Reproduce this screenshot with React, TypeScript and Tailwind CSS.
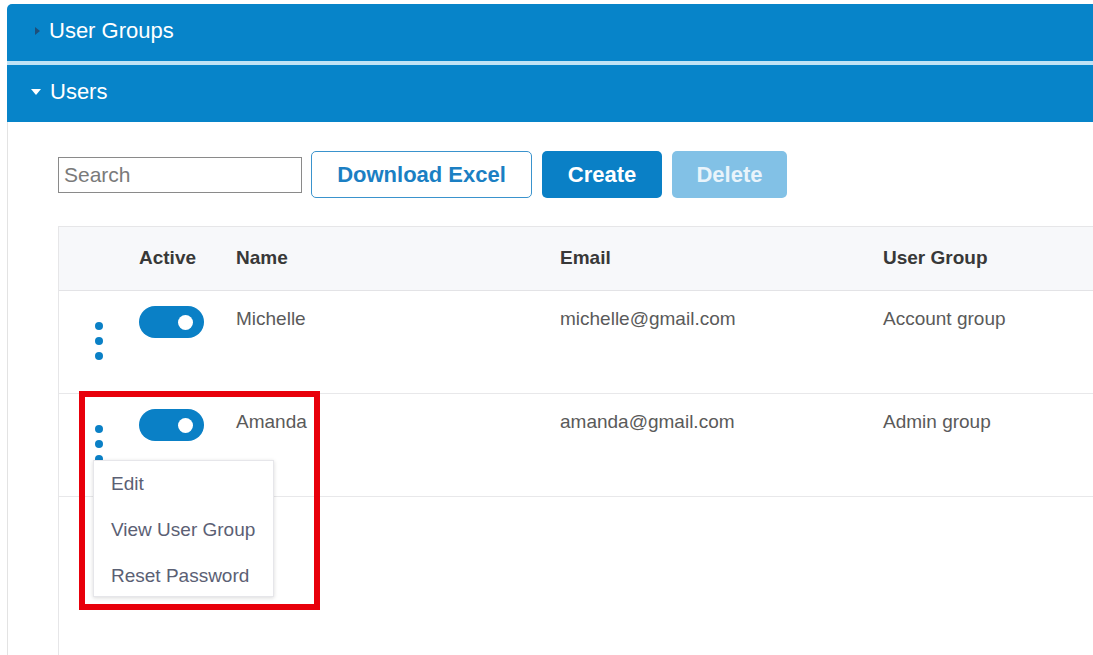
import React from "react";

function Toggle() {
  return (
    <div className="w-[65px] h-[32px] rounded-full bg-[#0a80c6] flex items-center justify-end pr-[11px]">
      <div className="w-[15px] h-[15px] rounded-full bg-white" />
    </div>
  );
}

function Dots() {
  return (
    <div className="flex flex-col items-center gap-[7px]">
      <div className="w-[8px] h-[8px] rounded-full bg-[#0a80c6]" />
      <div className="w-[8px] h-[8px] rounded-full bg-[#0a80c6]" />
      <div className="w-[8px] h-[8px] rounded-full bg-[#0a80c6]" />
    </div>
  );
}

function Row({ name, email, group, menu }: { name: string; email: string; group: string; menu?: boolean }) {
  return (
    <div className="relative flex h-[103px] border-b border-[#e8e8ea] text-[19px] text-[#5a5a5a]">
      <div className="w-[80px] flex justify-end pr-[36px] pt-[31px]">
        <Dots />
      </div>
      <div className="w-[97px] pt-[15px]">
        <Toggle />
      </div>
      <div className="w-[324px] pt-[17px] leading-[22px]">{name}</div>
      <div className="w-[323px] pt-[17px] leading-[22px]">{email}</div>
      <div className="flex-1 pt-[17px] leading-[22px]">{group}</div>
      {menu && (
        <div className="absolute left-[34px] top-[66px] w-[181px] h-[137px] bg-white border border-[#e6e6ea] shadow-[0_1px_4px_rgba(0,0,0,0.15)] flex flex-col pl-[17px] pt-[12px] gap-[24px] text-[19px] leading-[22px] text-[#5b6074] z-10">
          <div>Edit</div>
          <div>View User Group</div>
          <div>Reset Password</div>
        </div>
      )}
    </div>
  );
}

export default function App() {
  return (
    <div className="relative w-[1093px] h-[655px] overflow-hidden bg-white font-['Liberation_Sans',Arial,sans-serif]">
      <div className="pt-[4px] pl-[7px]">
        <div className="h-[57px] bg-[#0784c9] rounded-tl-[5px] flex items-center pl-[28px] pb-[4px] text-white text-[22px]">
          <span className="w-0 h-0 border-y-[4px] border-y-transparent border-l-[5px] border-l-[#1e4f7a] mr-[9px]" />
          User Groups
        </div>
        <div className="h-[4px] bg-[#bfe2f5]" />
        <div className="h-[57px] bg-[#0784c9] flex items-center pl-[24px] pb-[4px] text-white text-[22px]">
          <span className="w-0 h-0 border-x-[5px] border-x-transparent border-t-[6px] border-t-white mr-[9px]" />
          Users
        </div>
        <div className="border-l border-[#e3e3e3] h-[540px] pl-[50px] pt-[29px]">
          <div className="flex items-center">
            <div className="w-[244px] h-[36px] border border-[#8a8a8a] flex items-center pl-[5px] text-[21px] text-[#7a7a7a]">
              Search
            </div>
            <div className="ml-[9px] w-[221px] h-[47px] border border-[#3a93cd] rounded-[5px] flex items-center justify-center text-[22px] font-bold text-[#1b7fc3]">
              Download Excel
            </div>
            <div className="ml-[10px] w-[120px] h-[47px] rounded-[5px] bg-[#0a80c6] flex items-center justify-center text-[22px] font-bold text-white">
              Create
            </div>
            <div className="ml-[10px] w-[115px] h-[47px] rounded-[5px] bg-[#82c1e6] flex items-center justify-center text-[22px] font-bold text-[#e9f4fb]">
              Delete
            </div>
          </div>
          <div className="mt-[28px] border-l border-t border-[#e6e6e8] h-[500px]">
            <div className="flex h-[64px] bg-[#f7f8fa] border-b border-[#e3e3e6] items-center text-[19px] font-bold text-[#383838]">
              <div className="w-[80px]" />
              <div className="w-[97px]">Active</div>
              <div className="w-[324px]">Name</div>
              <div className="w-[323px]">Email</div>
              <div className="flex-1">User Group</div>
            </div>
            <Row name="Michelle" email="michelle@gmail.com" group="Account group" />
            <Row name="Amanda" email="amanda@gmail.com" group="Admin group" menu />
          </div>
        </div>
      </div>
      <div className="absolute left-[79px] top-[391px] w-[241px] h-[219px] border-[6px] border-[#e8000b] z-20 pointer-events-none" />
    </div>
  );
}
